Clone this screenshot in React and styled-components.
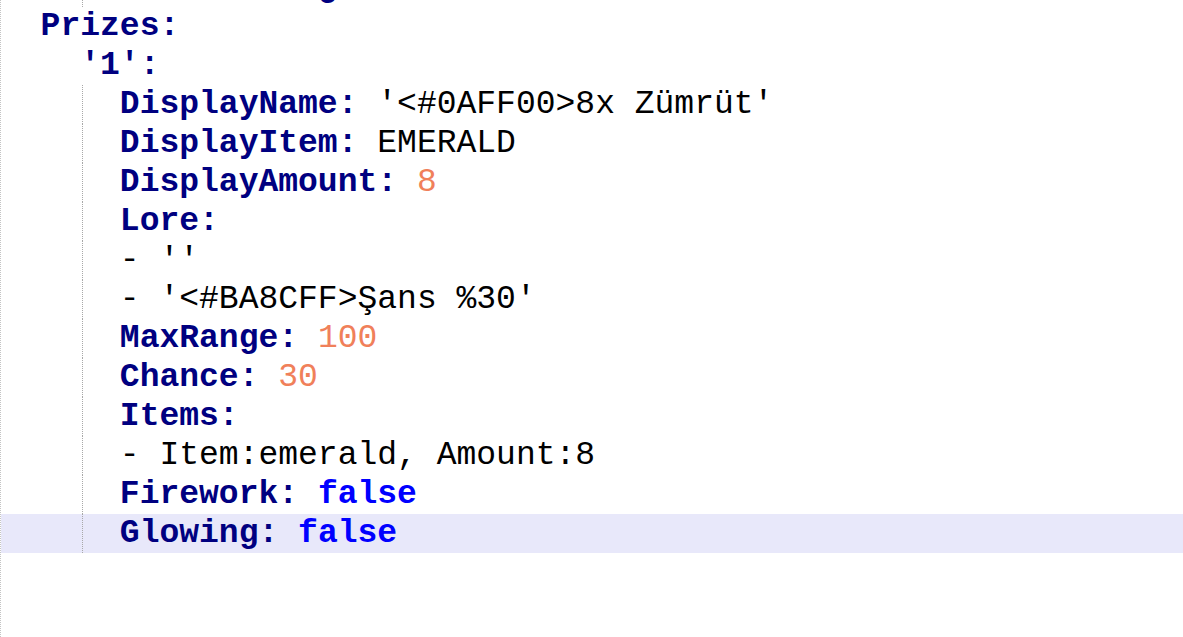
import styled, { createGlobalStyle } from 'styled-components'

const GlobalStyle = createGlobalStyle`
  html, body {
    margin: 0;
    padding: 0;
    background: #ffffff;
  }
`

//
const Editor = styled.div`
  height: 100vh;
  overflow: hidden;
  border-left: 1px dotted #c4c4c4;
  box-sizing: border-box;
  font-family: 'Liberation Mono', 'Courier New', monospace;
  font-size: 33px;
  color: #000000;
`

const Lines = styled.div`
  margin-top: -32px;
`

const Line = styled.div`
  position: relative;
  height: 39px;
  line-height: 39px;
  white-space: pre;
  background: ${(p) => (p.$highlight ? '#e8e8fa' : 'transparent')};
  &::before {
    content: '';
    display: ${(p) => (p.$guide ? 'block' : 'none')};
    position: absolute;
    left: 81px;
    top: 0;
    bottom: 0;
    border-left: 1px dotted #a8a8a8;
  }
`

const Key = styled.span`
  color: #000080;
  font-weight: 700;
`

const Num = styled.span`
  color: #f0805a;
`

const Bool = styled.span`
  color: #0000ff;
  font-weight: 700;
`

// the line above is scrolled out of view, only a descender peeks in
const lines = [
  { indent: 16, guide: true, tail: 'g' },
  { indent: 2, key: 'Prizes' },
  { indent: 4, key: "'1'" },
  { indent: 6, guide: true, key: 'DisplayName', str: "'<#0AFF00>8x Zümrüt'" },
  { indent: 6, guide: true, key: 'DisplayItem', str: 'EMERALD' },
  { indent: 6, guide: true, key: 'DisplayAmount', num: '8' },
  { indent: 6, guide: true, key: 'Lore' },
  { indent: 6, guide: true, item: "''" },
  { indent: 6, guide: true, item: "'<#BA8CFF>Şans %30'" },
  { indent: 6, guide: true, key: 'MaxRange', num: '100' },
  { indent: 6, guide: true, key: 'Chance', num: '30' },
  { indent: 6, guide: true, key: 'Items' },
  { indent: 6, guide: true, item: 'Item:emerald, Amount:8' },
  { indent: 6, guide: true, key: 'Firework', bool: 'false' },
  { indent: 6, guide: true, key: 'Glowing', bool: 'false', highlight: true },
]

const App = () => {
  return (
    <>
      <GlobalStyle />
      <Editor>
        <Lines>
          {lines.map((l, i) => (
            <Line key={i} $guide={l.guide} $highlight={l.highlight}>
              {' '.repeat(l.indent)}
              {l.tail ? (
                <Key>{l.tail}</Key>
              ) : l.item !== undefined ? (
                <>- {l.item}</>
              ) : (
                <>
                  <Key>{l.key}:</Key>
                  {l.str && <> {l.str}</>}
                  {l.num && (
                    <>
                      {' '}
                      <Num>{l.num}</Num>
                    </>
                  )}
                  {l.bool && (
                    <>
                      {' '}
                      <Bool>{l.bool}</Bool>
                    </>
                  )}
                </>
              )}
            </Line>
          ))}
        </Lines>
      </Editor>
    </>
  )
}

export default App
